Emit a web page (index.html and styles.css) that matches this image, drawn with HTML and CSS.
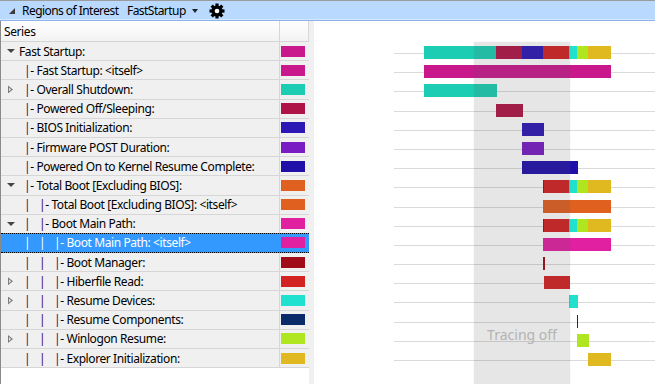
FILE: index.html
```html
<!DOCTYPE html>
<html lang="en">
<head>
    <meta charset="UTF-8">
    <meta name="viewport" content="width=device-width, initial-scale=1.0">
    <title>Regions of Interest</title>
    <link rel="stylesheet" href="styles.css">
</head>
<body>

<div class="toolbar">
    <span class="pin"></span>
    <span class="title">Regions of Interest</span>
    <span class="preset">FastStartup<span class="caret"></span></span>
    <svg class="gear" viewBox="0 0 16 16">
        <g fill="#000">
            <circle cx="8" cy="8" r="5.6"/>
            <rect x="6.4" y="0.5" width="3.2" height="15"/>
            <rect x="6.4" y="0.5" width="3.2" height="15" transform="rotate(45 8 8)"/>
            <rect x="6.4" y="0.5" width="3.2" height="15" transform="rotate(90 8 8)"/>
            <rect x="6.4" y="0.5" width="3.2" height="15" transform="rotate(135 8 8)"/>
        </g>
        <circle cx="8" cy="8" r="2.3" fill="#fff"/>
    </svg>
</div>

<div class="main">
    <!-- Series tree -->
    <div class="tree">
        <div class="tree-head">
            <div class="name">Series</div>
            <div class="swatch-cell"></div>
        </div>

        <div class="row">
            <div class="name"><span class="exp open"></span>Fast Startup:</div>
            <div class="swatch-cell"><span class="swatch c-fast"></span></div>
        </div>
        <div class="row">
            <div class="name"><span class="exp"></span><span class="guides"><span class="pipe">|</span>- </span>Fast Startup: &lt;itself&gt;</div>
            <div class="swatch-cell"><span class="swatch c-fast"></span></div>
        </div>
        <div class="row">
            <div class="name"><span class="exp shut"></span><span class="guides"><span class="pipe">|</span>- </span>Overall Shutdown:</div>
            <div class="swatch-cell"><span class="swatch c-teal"></span></div>
        </div>
        <div class="row">
            <div class="name"><span class="exp"></span><span class="guides"><span class="pipe">|</span>- </span>Powered Off/Sleeping:</div>
            <div class="swatch-cell"><span class="swatch c-crimson"></span></div>
        </div>
        <div class="row">
            <div class="name"><span class="exp"></span><span class="guides"><span class="pipe">|</span>- </span>BIOS Initialization:</div>
            <div class="swatch-cell"><span class="swatch c-indigo"></span></div>
        </div>
        <div class="row">
            <div class="name"><span class="exp"></span><span class="guides"><span class="pipe">|</span>- </span>Firmware POST Duration:</div>
            <div class="swatch-cell"><span class="swatch c-purple"></span></div>
        </div>
        <div class="row">
            <div class="name"><span class="exp"></span><span class="guides"><span class="pipe">|</span>- </span>Powered On to Kernel Resume Complete:</div>
            <div class="swatch-cell"><span class="swatch c-navyblue"></span></div>
        </div>
        <div class="row">
            <div class="name"><span class="exp open"></span><span class="guides"><span class="pipe">|</span>- </span>Total Boot [Excluding BIOS]:</div>
            <div class="swatch-cell"><span class="swatch c-orange"></span></div>
        </div>
        <div class="row">
            <div class="name"><span class="exp"></span><span class="guides"><span class="guide pipe">|</span><span class="pipe">|</span>- </span>Total Boot [Excluding BIOS]: &lt;itself&gt;</div>
            <div class="swatch-cell"><span class="swatch c-orange"></span></div>
        </div>
        <div class="row">
            <div class="name"><span class="exp open"></span><span class="guides"><span class="guide pipe">|</span><span class="pipe">|</span>- </span>Boot Main Path:</div>
            <div class="swatch-cell"><span class="swatch c-pink"></span></div>
        </div>
        <div class="row selected">
            <div class="name"><span class="exp"></span><span class="guides"><span class="guide pipe">|</span><span class="guide pipe">|</span><span class="pipe">|</span>- </span>Boot Main Path: &lt;itself&gt;</div>
            <div class="swatch-cell"><span class="swatch c-pink"></span></div>
        </div>
        <div class="row">
            <div class="name"><span class="exp"></span><span class="guides"><span class="guide pipe">|</span><span class="guide pipe">|</span><span class="pipe">|</span>- </span>Boot Manager:</div>
            <div class="swatch-cell"><span class="swatch c-darkred"></span></div>
        </div>
        <div class="row">
            <div class="name"><span class="exp shut"></span><span class="guides"><span class="guide pipe">|</span><span class="guide pipe">|</span><span class="pipe">|</span>- </span>Hiberfile Read:</div>
            <div class="swatch-cell"><span class="swatch c-red"></span></div>
        </div>
        <div class="row">
            <div class="name"><span class="exp shut"></span><span class="guides"><span class="guide pipe">|</span><span class="guide pipe">|</span><span class="pipe">|</span>- </span>Resume Devices:</div>
            <div class="swatch-cell"><span class="swatch c-cyan"></span></div>
        </div>
        <div class="row">
            <div class="name"><span class="exp"></span><span class="guides"><span class="guide pipe">|</span><span class="guide pipe">|</span><span class="pipe">|</span>- </span>Resume Components:</div>
            <div class="swatch-cell"><span class="swatch c-navy"></span></div>
        </div>
        <div class="row">
            <div class="name"><span class="exp shut"></span><span class="guides"><span class="guide pipe">|</span><span class="guide pipe">|</span><span class="pipe">|</span>- </span>Winlogon Resume:</div>
            <div class="swatch-cell"><span class="swatch c-lime"></span></div>
        </div>
        <div class="row">
            <div class="name"><span class="exp"></span><span class="guides"><span class="guide pipe">|</span><span class="guide pipe">|</span><span class="pipe">|</span>- </span>Explorer Initialization:</div>
            <div class="swatch-cell"><span class="swatch c-gold"></span></div>
        </div>
    </div>

    <div class="splitter"></div>

    <!-- Timeline -->
    <div class="chart">
        <div class="chart-head"></div>
        <div class="lanes">
            <div class="lane"><div class="bar" style="left:110px">
                <span class="seg c-teal" style="width:72px"></span><span class="seg c-crimson" style="width:26px"></span><span class="seg c-indigo" style="width:21px"></span><span class="seg c-red" style="width:26px"></span><span class="seg c-cyan" style="width:8px"></span><span class="seg c-lime" style="width:11px"></span><span class="seg c-gold" style="width:23px"></span>
            </div></div>
            <div class="lane"><div class="bar" style="left:110px"><span class="seg c-fast" style="width:187px"></span></div></div>
            <div class="lane"><div class="bar" style="left:110px"><span class="seg c-teal" style="width:73px"></span></div></div>
            <div class="lane"><div class="bar" style="left:182px"><span class="seg c-crimson" style="width:27px"></span></div></div>
            <div class="lane"><div class="bar" style="left:208px"><span class="seg c-indigo" style="width:22px"></span></div></div>
            <div class="lane"><div class="bar" style="left:208px"><span class="seg c-purple" style="width:22px"></span></div></div>
            <div class="lane"><div class="bar" style="left:208px"><span class="seg c-navyblue" style="width:56px"></span></div></div>
            <div class="lane"><div class="bar" style="left:229px">
                <span class="seg c-darkred" style="width:1px"></span><span class="seg c-red" style="width:25px"></span><span class="seg c-cyan" style="width:8px"></span><span class="seg c-lime" style="width:11px"></span><span class="seg c-gold" style="width:23px"></span>
            </div></div>
            <div class="lane"><div class="bar" style="left:229px"><span class="seg c-orange" style="width:68px"></span></div></div>
            <div class="lane"><div class="bar" style="left:229px">
                <span class="seg c-darkred" style="width:1px"></span><span class="seg c-red" style="width:25px"></span><span class="seg c-cyan" style="width:8px"></span><span class="seg c-lime" style="width:11px"></span><span class="seg c-gold" style="width:23px"></span>
            </div></div>
            <div class="lane"><div class="bar" style="left:229px"><span class="seg c-pink" style="width:68px"></span></div></div>
            <div class="lane"><div class="bar" style="left:229px"><span class="seg c-darkred" style="width:2px"></span></div></div>
            <div class="lane"><div class="bar" style="left:230px"><span class="seg c-red" style="width:26px"></span></div></div>
            <div class="lane"><div class="bar" style="left:255px"><span class="seg c-cyan" style="width:9px"></span></div></div>
            <div class="lane"><div class="bar" style="left:263px"><span class="seg c-navy" style="width:1px"></span></div></div>
            <div class="lane"><div class="bar" style="left:263px"><span class="seg c-lime" style="width:12px"></span></div></div>
            <div class="lane"><div class="bar" style="left:274px"><span class="seg c-gold" style="width:23px"></span></div></div>

            <div class="band"><span class="band-label">Tracing off</span></div>
        </div>
    </div>
</div>

</body>
</html>
```

FILE: styles.css
```css
body {
    margin: 0;
    width: 655px;
    height: 384px;
    overflow: hidden;
    font-family: "Noto Sans", sans-serif;
    font-size: 12px;
    letter-spacing: -0.4px;
    color: #000;
    background-color: #fff;
    display: flex;
    flex-direction: column;
}

/* top bar */
.toolbar {
    height: 19px;
    border-top: 1px solid #9c9c9c;
    border-bottom: 1px solid #8cb3e6;
    background-color: #b9d9fe;
    box-shadow: inset 0 -1px 0 #d3e7fe;
    display: flex;
    align-items: center;
    font-size: 12px;
    letter-spacing: -0.55px;
    flex-shrink: 0;
}
.pin {
    width: 0;
    height: 0;
    margin: 1px 0 0 9px;
    border-style: solid;
    border-width: 0 0 6px 6px;
    border-color: transparent transparent #3c3c3c transparent;
}
.title {
    margin-left: 7px;
    width: 105px;
    white-space: nowrap;
}
.preset {
    display: flex;
    align-items: center;
    width: 82px;
    white-space: nowrap;
}
.caret {
    width: 0;
    height: 0;
    margin: 1px 0 0 6px;
    border-style: solid;
    border-width: 4px 3.5px 0 3.5px;
    border-color: #222 transparent transparent transparent;
}
.gear {
    width: 16px;
    height: 16px;
}

.main {
    flex: 1;
    display: flex;
    min-height: 0;
}

/* series tree */
.tree {
    width: 308px;
    border-left: 1px solid #8a8a8a;
    background-color: #fff;
    flex-shrink: 0;
}
.tree-head, .row {
    display: grid;
    grid-template-columns: 279px 29px;
    box-sizing: border-box;
}
.tree-head {
    height: 21px;
    background: linear-gradient(#ffffff, #f2f2f2);
    border-bottom: 1px solid #d5d5d5;
}
.tree-head .name {
    padding-left: 3px;
}
.tree-head .swatch-cell {
    border-right: 1px solid #d8d8d8;
}
.name {
    border-right: 1px solid #d6d6d6;
    display: flex;
    align-items: center;
    white-space: nowrap;
    overflow: hidden;
}
.row {
    height: 19.2px;
    background-color: #f0f0f0;
    border-bottom: 1px solid #d6d6d6;
}
.swatch-cell {
    display: flex;
    align-items: center;
}
.swatch {
    width: 24px;
    height: 11px;
    margin-left: 1px;
}

.exp {
    width: 18px;
    height: 10px;
    flex-shrink: 0;
    position: relative;
}
.exp.open::after {
    content: "";
    position: absolute;
    left: 6px;
    top: 3px;
    border-style: solid;
    border-width: 4px 4px 0 4px;
    border-color: #454545 transparent transparent transparent;
}
.exp.shut::after {
    content: "";
    position: absolute;
    left: 7px;
    top: 1px;
    width: 5px;
    height: 8px;
    background-color: #7c7c7c;
    clip-path: polygon(0 0, 100% 50%, 0 100%);
}
.exp.shut::before {
    content: "";
    position: absolute;
    left: 8px;
    top: 3px;
    width: 2px;
    height: 4px;
    background-color: #e8e8e8;
    z-index: 1;
    clip-path: polygon(0 0, 100% 50%, 0 100%);
}
.guides {
    padding-left: 5px;
    white-space: pre;
}
.guide {
    display: inline-block;
    width: 15px;
}
.pipe {
    color: #4a0d5e;
}

.row.selected {
    height: 20.2px;
    margin-top: -1px;
    background-color: #3399ff;
    color: #fff;
    border-top: 1px dotted #000;
    border-bottom: 1px dotted #000;
}
.row.selected .name {
    border-right-color: #3399ff;
}
.row.selected .pipe {
    color: #fff;
}

.splitter {
    width: 5px;
    background-color: #f0f0f0;
    flex-shrink: 0;
}

/* timeline */
.chart {
    flex: 1;
    display: flex;
    flex-direction: column;
    background-color: #fff;
}
.chart-head {
    height: 21px;
    flex-shrink: 0;
}
.lanes {
    flex: 1;
    position: relative;
}
.lane {
    height: 19.2px;
    position: relative;
}
.lane::before {
    content: "";
    position: absolute;
    left: 80px;
    right: 0;
    top: 11px;
    height: 1px;
    background-color: #dadada;
}
.bar {
    position: absolute;
    top: 4px;
    height: 13px;
    display: flex;
}
.seg {
    height: 100%;
    flex-shrink: 0;
}
.band {
    position: absolute;
    left: 160px;
    width: 96px;
    top: 0;
    bottom: 0;
    background-color: rgba(90, 90, 90, 0.15);
    box-shadow: 0 0 1px rgba(90, 90, 90, 0.2);
}
.band-label {
    position: absolute;
    left: 0;
    right: 0;
    top: 283px;
    text-align: center;
    font-size: 14px;
    letter-spacing: 0;
    color: #b3b3b3;
}

/* series colours */
.c-fast { background-color: #c8188c; }
.c-teal { background-color: #1ccdb3; }
.c-crimson { background-color: #ae1446; }
.c-indigo { background-color: #2c18b4; }
.c-purple { background-color: #7a1cc4; }
.c-navyblue { background-color: #2010a8; }
.c-orange { background-color: #e06020; }
.c-pink { background-color: #e020a0; }
.c-darkred { background-color: #a00c18; }
.c-red { background-color: #d22222; }
.c-cyan { background-color: #20e0d0; }
.c-navy { background-color: #0a2a6a; }
.c-lime { background-color: #b0e620; }
.c-gold { background-color: #e0b820; }
```
